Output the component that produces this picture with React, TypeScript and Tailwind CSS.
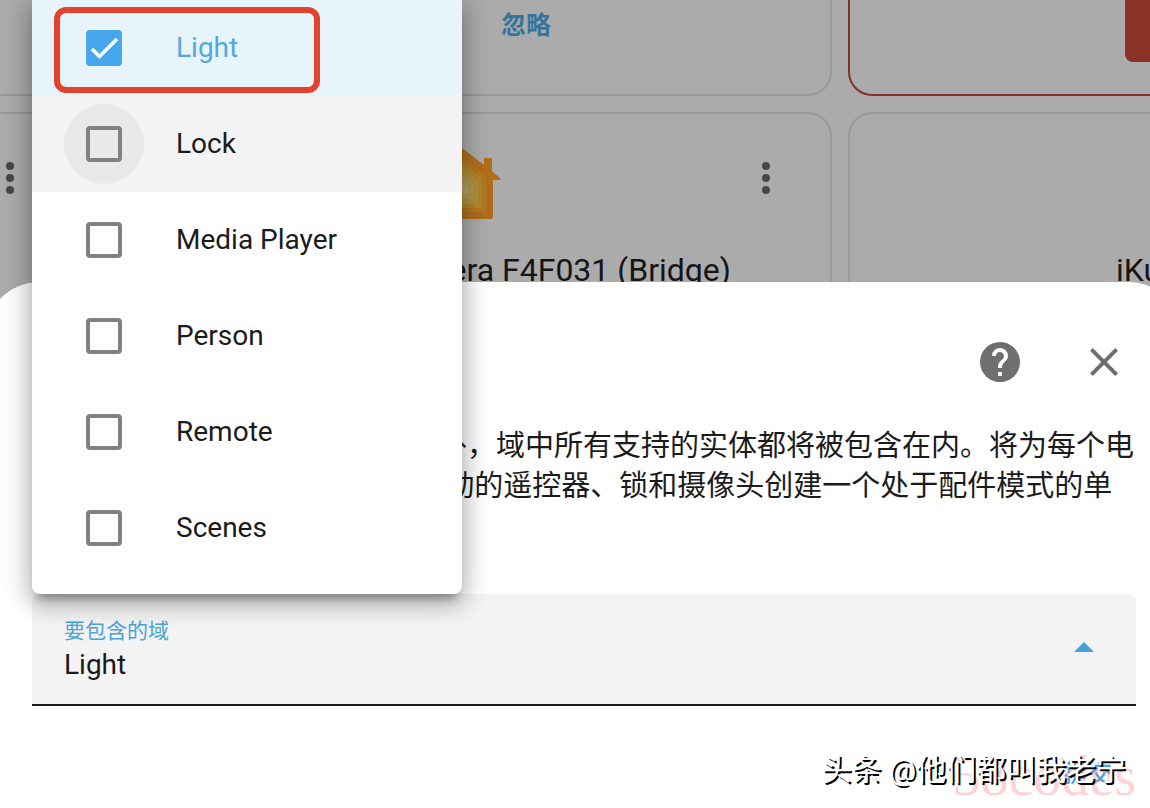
import { useState } from "react";

const DOMAINS = ["Light", "Lock", "Media Player", "Person", "Remote", "Scenes"] as const;

function DotsIcon() {
  return (
    <svg viewBox="0 0 8 32" className="h-8 w-2" fill="#484848">
      <circle cx="4" cy="4" r="4" />
      <circle cx="4" cy="16" r="4" />
      <circle cx="4" cy="28" r="4" />
    </svg>
  );
}

function HomeKitIcon() {
  return (
    <svg viewBox="0 0 80 80" className="size-20">
      <path
        d="M40 6 L62 23 V17 Q62 16 63 16 H69 Q70 16 70 17 V29 L79 37 Q79 38 78 38 H71 V75 Q71 77 69 77 H11 Q9 77 9 75 V38 H2 Q1 38 1 37 Z"
        fill="#b06e1c"
      />
      <path d="M40 14 L64 33 V70 H16 V33 Z" fill="#b2781f" />
      <path d="M40 20 L60 36 V66 H20 V36 Z" fill="#b3842f" />
      <path d="M40 26 L56 39 V62 H24 V39 Z" fill="#b18e3e" />
      <path d="M40 32 L51 43 V57 H29 V43 Z" fill="#b0984f" />
      <path d="M40 39 L46 46 V52 H34 V46 Z" fill="#b4a166" />
    </svg>
  );
}

function Integrations() {
  const card = "overflow-hidden border-2 border-[#999999]";
  return (
    <main className="grid h-full grid-cols-[76px_1fr_302px] grid-rows-[96px_1fr] gap-x-4 gap-y-4">
      <section className={`${card} rounded-br-3xl border-l-0 border-t-0`} />
      <section className={`${card} flex justify-center rounded-b-3xl border-t-0 pt-1`}>
        <button className="ml-32 h-11 text-[25px] font-bold text-[#34739c]">忽略</button>
      </section>
      <section className="flex items-start justify-end overflow-hidden rounded-bl-3xl border-b-2 border-l-2 border-[#852f29]">
        <button aria-label="重新配置" className="h-[62px] w-[25px] rounded-bl-lg bg-[#8a3128]" />
      </section>

      <section className={`${card} rounded-tr-3xl border-b-0 border-l-0 pt-12`}>
        <button aria-label="菜单" className="ml-[6px]">
          <DotsIcon />
        </button>
      </section>
      <section className={`${card} relative rounded-t-3xl border-b-0 pt-7`}>
        <div className="flex justify-center">
          <HomeKitIcon />
        </div>
        <button aria-label="菜单" className="absolute right-[60px] top-12">
          <DotsIcon />
        </button>
        <h2 className="mt-7 text-center text-[32px] leading-10">Xiaomi Pro 2 Camera F4F031 (Bridge)</h2>
      </section>
      <section className={`${card} rounded-tl-3xl border-b-0 border-r-0 pt-[136px]`}>
        <h2 className="whitespace-nowrap pl-[266px] text-[32px] leading-10">iKuai</h2>
      </section>
    </main>
  );
}

function OptionsDialog({ selected }: { selected: string }) {
  return (
    <div role="dialog" className="absolute inset-x-0 bottom-0 top-[282px] flex">
      <div className="-ml-4 -mr-[34px] flex-1 rounded-t-[56px] bg-white text-[#1b1b1b]">
        <header className="flex justify-end gap-2 px-8 pt-8">
          <button aria-label="帮助" className="flex size-24 items-center justify-center">
            <svg viewBox="0 0 24 24" className="size-12" fill="#6f6f6f">
              <path d="M15.07,11.25L14.17,12.17C13.45,12.89 13,13.5 13,15H11V14.5C11,13.39 11.45,12.39 12.17,11.67L13.41,10.41C13.78,10.05 14,9.55 14,9C14,7.89 13.1,7 12,7A2,2 0 0,0 10,9H8A4,4 0 0,1 12,5A4,4 0 0,1 16,9C16,9.88 15.64,10.67 15.07,11.25M13,19H11V17H13M12,2A10,10 0 0,0 2,12A10,10 0 0,0 12,22A10,10 0 0,0 22,12C22,6.47 17.5,2 12,2Z" />
            </svg>
          </button>
          <button aria-label="关闭" className="flex size-24 items-center justify-center">
            <svg viewBox="0 0 24 24" className="size-12" fill="#6f6f6f">
              <path d="M19,6.41L17.59,5L12,10.59L6.41,5L5,6.41L10.59,12L5,17.59L6.41,19L12,13.41L17.59,19L19,17.59L13.41,12L19,6.41Z" />
            </svg>
          </button>
        </header>

        <div className="px-12 pt-4">
          <p className="text-[29px] leading-10">
            选择要包含的域，除了分类实体外，域中所有支持的实体都将被包含在内。将为每个电视 媒体播放器、以及各种基于活动的遥控器、锁和摄像头创建一个处于配件模式的单
            <br />独 HomeKit 实例。
          </p>

          <div className="mt-12 flex h-28 items-center rounded-t-lg border-b-2 border-[#1b1b1b] bg-[#f3f3f3] pl-8 pr-[42px]">
            <div className="flex flex-1 flex-col">
              <label htmlFor="domains" className="text-[21px] leading-8 text-[#4ba3d9]">
                要包含的域
              </label>
              <select
                id="domains"
                value={selected}
                onChange={() => {}}
                className="h-9 w-full appearance-none bg-transparent text-[28px] leading-9 outline-none"
              >
                <option>{selected}</option>
              </select>
            </div>
            <svg viewBox="0 0 20 14" className="h-[14px] w-5" fill="#45a1dd">
              <path d="M0 10 L10 0 L20 10 Z" />
            </svg>
          </div>
        </div>

        <footer className="flex justify-end pr-[72px] pt-12">
          <button className="h-10 text-[24px] font-medium text-[#45a1e6]">提交</button>
        </footer>
      </div>
    </div>
  );
}

type DomainMenuProps = { checked: string[]; onToggle: (name: string) => void };

function DomainMenu({ checked, onToggle }: DomainMenuProps) {
  return (
    <ul className="absolute left-8 top-0 w-[430px] rounded-b-lg bg-white pb-[18px] shadow-[0_10px_10px_-6px_rgba(0,0,0,0.3),0_8px_24px_2px_rgba(0,0,0,0.22),0_4px_28px_4px_rgba(0,0,0,0.12)]">
      {DOMAINS.map((name) => {
        const on = checked.includes(name);
        const focused = name === "Lock";
        return (
          <li key={name} className={on ? "bg-[#e8f4fc]" : focused ? "bg-[#f3f3f3]" : ""}>
            <label
              className={`flex h-24 items-center gap-8 pl-8 text-[28px] ${
                on ? "text-[#55a8dc]" : "text-[#1b1b1b]"
              }`}
            >
              <span
                className={`relative flex size-20 items-center justify-center rounded-full ${
                  focused ? "bg-[#e9e9e9]" : ""
                }`}
              >
                <input
                  type="checkbox"
                  checked={on}
                  onChange={() => onToggle(name)}
                  className="size-9 appearance-none rounded border-4 border-[#828282] checked:border-[#47a6ec] checked:bg-[#47a6ec]"
                />
                {on && (
                  <svg viewBox="0 0 36 36" className="pointer-events-none absolute size-9" fill="none">
                    <path d="M6 19 L13.5 26.5 L31 9" stroke="#fff" strokeWidth="3.6" />
                  </svg>
                )}
              </span>
              {name}
            </label>
          </li>
        );
      })}
    </ul>
  );
}

function Watermark() {
  return (
    <div className="pointer-events-none absolute inset-x-0 bottom-0 h-16">
      <span className="absolute bottom-1 right-[14px] font-['Liberation_Serif',serif] text-[56px] leading-none text-[#ff7d87]/35">
        58codes
      </span>
      <span className="absolute bottom-5 right-6 whitespace-nowrap text-[30px] leading-9 text-white [text-shadow:2px_2px_0_#000]">
        头条 @他们都叫我老宁
      </span>
    </div>
  );
}

export default function App() {
  const [checked, setChecked] = useState<string[]>(["Light"]);

  const toggle = (name: string) =>
    setChecked((prev) => (prev.includes(name) ? prev.filter((n) => n !== name) : [...prev, name]));

  return (
    <div className="relative h-screen overflow-hidden bg-[#ababab] font-[Roboto,'Noto_Sans_CJK_SC',sans-serif] text-[#151515]">
      <Integrations />
      <OptionsDialog selected={checked.join(", ")} />
      <DomainMenu checked={checked} onToggle={toggle} />
      <div className="pointer-events-none absolute left-[54px] top-[7px] h-[86px] w-[266px] rounded-xl border-6 border-[#e2432e]" />
      <Watermark />
    </div>
  );
}
